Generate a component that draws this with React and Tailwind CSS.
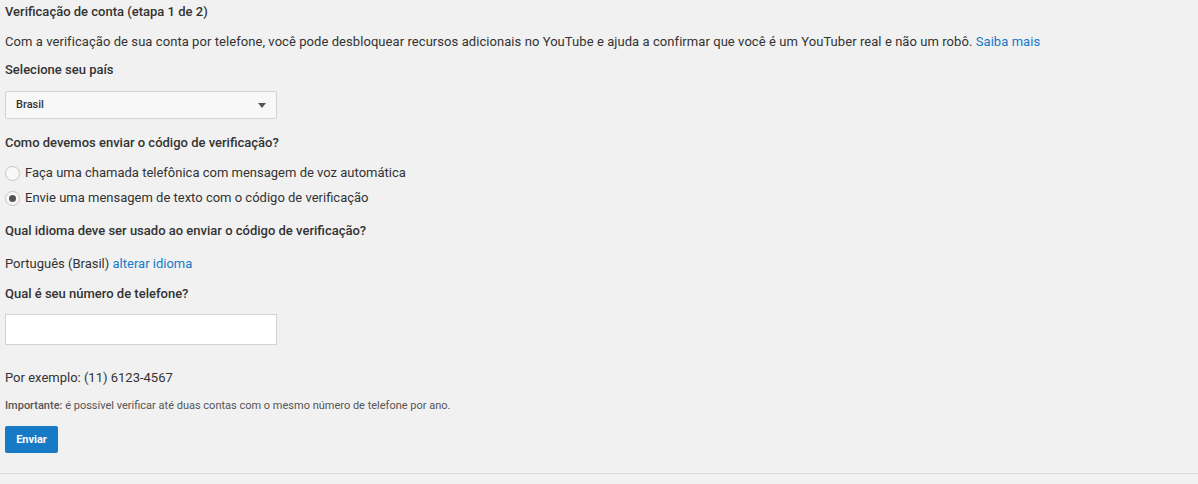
import React, { useState } from "react";

function Radio({ checked, label, onClick }) {
  return (
    <label className="flex items-center h-5 cursor-pointer" onClick={onClick}>
      <span className="w-[15px] h-[15px] rounded-full border border-[#c6c6c6] bg-[#f8f8f8] flex items-center justify-center shrink-0">
        {checked && <span className="w-[7px] h-[7px] rounded-full bg-[#555]" />}
      </span>
      <span className="ml-[5px]">{label}</span>
    </label>
  );
}

export default function App() {
  const [method, setMethod] = useState("sms");

  return (
    <div className="min-h-screen bg-[#f1f1f1] text-[#333] text-[13px] leading-5 font-['Roboto',sans-serif]">
      <div className="px-[5px] pt-[2px]">
        {/* header */}
        <div className="font-medium">Verificação de conta (etapa 1 de 2)</div>
        <div className="mt-[10px] tracking-[0.065px]">
          Com a verificação de sua conta por telefone, você pode desbloquear recursos adicionais no YouTube e ajuda a confirmar que você é um YouTuber real e não um robô.{" "}
          <a className="text-[#167ac6]" href="#">Saiba mais</a>
        </div>

        {/* country */}
        <div className="mt-[8px] font-medium">Selecione seu país</div>
        <button className="mt-[11px] w-[272px] h-[28px] border border-[#d3d3d3] bg-[#f8f8f8] rounded-[2px] flex items-center justify-between pl-[10px] pr-[10px] text-[11px] font-medium text-[#333]">
          <span>Brasil</span>
          <span className="w-0 h-0 border-l-[4px] border-r-[4px] border-t-[5px] border-l-transparent border-r-transparent border-t-[#555]" />
        </button>

        {/* method */}
        <div className="mt-[14px] font-medium">Como devemos enviar o código de verificação?</div>
        <div className="mt-[10px] flex flex-col gap-[5px]">
          <Radio
            checked={method === "call"}
            label="Faça uma chamada telefônica com mensagem de voz automática"
            onClick={() => setMethod("call")}
          />
          <Radio
            checked={method === "sms"}
            label="Envie uma mensagem de texto com o código de verificação"
            onClick={() => setMethod("sms")}
          />
        </div>

        {/* language */}
        <div className="mt-[13px] font-medium">Qual idioma deve ser usado ao enviar o código de verificação?</div>
        <div className="mt-[13px]">
          Português (Brasil) <a className="text-[#167ac6]" href="#">alterar idioma</a>
        </div>

        {/* phone */}
        <div className="mt-[10px] font-medium">Qual é seu número de telefone?</div>
        <input
          type="text"
          className="mt-[10px] block w-[272px] h-[31px] bg-white border border-[#d3d3d3] px-2 outline-none"
        />
        <div className="mt-[23px]">Por exemplo: (11) 6123-4567</div>
        <div className="mt-[10px] text-[11px] leading-4 text-[#555]">
          <span className="font-medium">Importante:</span> é possível verificar até duas contas com o mesmo número de telefone por ano.
        </div>
        <button className="mt-[12px] h-[27px] w-[53px] rounded-[2px] bg-[#167ac6] text-white text-[11px] font-bold">
          Enviar
        </button>
      </div>
      <div className="mt-[20px] border-t border-[#dcdcdc]" />
    </div>
  );
}
